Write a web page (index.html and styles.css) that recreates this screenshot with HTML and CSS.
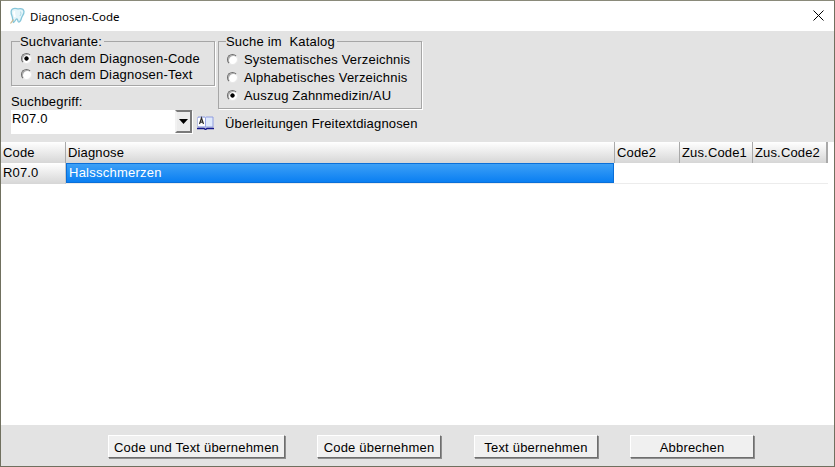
FILE: index.html
```html
<!DOCTYPE html>
<html lang="de">
<head>
<meta charset="utf-8">
<title>Diagnosen-Code</title>
<link rel="stylesheet" href="styles.css">
</head>
<body>
<div class="window">
  <header class="titlebar">
    <svg class="app-icon" width="16" height="18" viewBox="0 0 16 18">
      <path d="M3.500 2C6 .5 8 2 9.500 1.800C11.500 1.500 14.500 1.500 15 4.500C15.300 7 13 9 12.500 11C12 13 11 15.500 9.500 15C8.500 14.500 9 12 7.800 11.800C6.500 12 6 15 4.500 15.500C3.500 14.500 4 11.500 3 9C2 6.500 1.500 3.500 3.500 2Z" fill="#e6f5fa" stroke="#86c6da" stroke-width="1.300"/>
      <path d="M5.500 4C4.500 5.500 5.500 8 6 10" fill="none" stroke="#ffffff" stroke-width="1.800"/>
      <path d="M11 4.500C12.500 5 12 7.500 11 9" fill="none" stroke="#a9d8e6" stroke-width="1"/>
      <path d="M1.500 16.500L4.500 12.500" stroke="#cdb98f" stroke-width="1.200"/>
    </svg>
    <span class="title">Diagnosen-Code</span>
    <svg class="close" width="11" height="11" viewBox="0 0 11 11"><path d="M.5.5l10 10M10.500.5l-10 10" stroke="#000" stroke-width="1" fill="none"/></svg>
  </header>

  <section class="search">
    <fieldset class="group group-variant">
      <legend>Suchvariante:</legend>
      <label class="option"><input type="radio" name="variant" checked>nach dem Diagnosen-Code</label>
      <label class="option"><input type="radio" name="variant">nach dem Diagnosen-Text</label>
    </fieldset>
    <fieldset class="group group-catalog">
      <legend>Suche im&nbsp; Katalog</legend>
      <label class="option"><input type="radio" name="catalog">Systematisches Verzeichnis</label>
      <label class="option"><input type="radio" name="catalog">Alphabetisches Verzeichnis</label>
      <label class="option"><input type="radio" name="catalog" checked>Auszug Zahnmedizin/AU</label>
    </fieldset>
    <div class="term-label">Suchbegriff:</div>
    <div class="term-row">
      <div class="combo">
        <span class="combo-value">R07.0</span>
        <span class="combo-button"><svg width="9" height="5" viewBox="0 0 9 5"><path d="M0 0h9L4.500 5z" fill="#000"/></svg></span>
      </div>
      <svg class="book" width="17" height="14" viewBox="0 0 17 14">
        <path d="M1 1h7l.5.5L9 1h7v10H1z" fill="#dfe9fb" stroke="#8f9ce0" stroke-width="1"/>
        <path d="M1 2h7v8H1z" fill="#fff"/>
        <path d="M8.500 2v9" stroke="#9aa6e6" stroke-width="1"/>
        <path d="M0 12.500h7l1.500 1 1.500-1h7" fill="none" stroke="#14168a" stroke-width="1.500"/>
        <path d="M2.500 8l2-6 2 6M3.300 6.200h2.400" fill="none" stroke="#2a2a2a" stroke-width="1.200"/>
      </svg>
      <span class="link">Überleitungen Freitextdiagnosen</span>
    </div>
  </section>

  <section class="table">
    <div class="thead">
      <div class="th col-code">Code</div>
      <div class="th col-diag">Diagnose</div>
      <div class="th col-code2">Code2</div>
      <div class="th col-z1">Zus.Code1</div>
      <div class="th col-z2">Zus.Code2</div>
    </div>
    <div class="tr">
      <div class="td-head col-code">R07.0</div>
      <div class="td-selected">Halsschmerzen</div>
    </div>
  </section>

  <footer class="actions">
    <button class="btn btn-both">Code und Text übernehmen</button>
    <button class="btn btn-code">Code übernehmen</button>
    <button class="btn btn-text">Text übernehmen</button>
    <button class="btn btn-cancel">Abbrechen</button>
  </footer>
</div>
</body>
</html>
```
FILE: styles.css
```css
* { box-sizing: border-box; }
html, body { margin: 0; height: 100%; }
body {
  font-family: "Liberation Sans", Arial, sans-serif;
  font-size: 13px;
  letter-spacing: .2px;
  color: #000;
  overflow: hidden;
}
.window {
  width: 835px;
  height: 467px;
  display: flex;
  flex-direction: column;
  background: #e3e3e3;
  border: 1px solid #70705f;
  border-top-color: #8a8a7a;
}
.titlebar {
  height: 30px;
  flex: none;
  background: #fff;
  display: flex;
  align-items: center;
  padding: 0 10px 0 8px;
}
.app-icon { flex: none; }
.title {
  font-family: "Noto Sans", sans-serif;
  font-size: 11.500px;
  letter-spacing: 0;
  margin-left: 5px;
  flex: 1;
}
.close { margin-top: -1px; }
.search {
  height: 111px;
  flex: none;
  display: grid;
  grid-template-columns: 204px 204px;
  grid-template-rows: 50px 25px 24px;
  column-gap: 3px;
  padding: 4px 0 0 10px;
  align-items: start;
}
.group {
  margin: 0;
  padding: 2px 0 0 9px;
  border: 1px solid #a6a6a6;
  box-shadow: 1px 1px 0 #fff;
  min-width: 0;
}
.group legend {
  padding: 0 2px 0 0;
  margin-left: -1px;
  line-height: 13px;
}
.group-variant { height: 51px; grid-row: 1; grid-column: 1; }
.group-catalog { height: 74px; grid-row: 1 / 3; grid-column: 2; padding-left: 8px; }
.option {
  display: flex;
  align-items: center;
  height: 16px;
  white-space: nowrap;
}
.group-catalog .option { height: 18px; }
.option input {
  appearance: none;
  width: 11px;
  height: 11px;
  margin: 0 5px 0 0;
  border-radius: 50%;
  flex: none;
  background: #fff;
  border: 1px solid;
  border-color: #6c6c6c #e8e8e8 #e8e8e8 #6c6c6c;
  box-shadow: inset 1px 1px 0 #b0b0b0;
}
.group-catalog .option input { margin-right: 6px; }
.option input:checked {
  background: radial-gradient(circle at 50% 50%, #000 0 1.800px, #fff 2.500px);
}
.term-label {
  grid-row: 2;
  grid-column: 1;
  line-height: 15px;
  align-self: end;
  margin-bottom: 1px;
}
.term-row {
  grid-row: 3;
  grid-column: 1 / 3;
  display: flex;
  align-items: center;
  height: 24px;
}
.combo {
  width: 181px;
  height: 24px;
  display: flex;
  background: #fff;
  flex: none;
}
.combo-value { flex: 1; padding-left: 1px; line-height: 18px; }
.combo-button {
  width: 17px;
  height: 23px;
  background: #ececec;
  border: 2px solid;
  border-color: #7a7a7a #7a7a7a #7a7a7a #f2f2f2;
  box-shadow: 1px 1px 0 #fff;
  display: flex;
  align-items: center;
  justify-content: center;
}
.book { margin: 2px 0 0 5px; flex: none; }
.link { margin-left: 11px; padding-top: 2px; white-space: nowrap; letter-spacing: .15px; }
.table {
  flex: 1;
  background: #fff;
  min-height: 0;
  letter-spacing: .15px;
}
.thead, .tr { display: flex; }
.thead { height: 21px; }
.tr { height: 21px; border-bottom: 1px solid #ececec; width: 827px; }
.th, .td-head {
  background: linear-gradient(#ffffff, #d6d6d6);
  border-right: 1px solid #a9a9a9;
  padding-left: 2px;
  line-height: 21px;
  white-space: nowrap;
}
.thead .col-z2 { border-right-width: 2px; }
.td-head { border-right-color: #c8c8c8; height: 21px; line-height: 20px; }
.col-code { width: 65px; }
.col-diag { width: 549px; }
.col-code2 { width: 65px; }
.col-z1 { width: 73px; }
.col-z2 { width: 75px; }
.td-selected {
  background: linear-gradient(#3da0f6, #0a7ff2);
  border: 1px solid #0a6fd8;
  color: #fff;
  height: 20px;
  width: 548px;
  padding-left: 2px;
  line-height: 18px;
  letter-spacing: .25px;
}
.actions {
  height: 41px;
  flex: none;
  display: flex;
  align-items: flex-start;
  padding: 10px 0 0 107px;
}
.btn {
  font: inherit;
  letter-spacing: .2px;
  height: 23px;
  padding: 1px 0 0;
  background: #f0f0f0;
  border: 1px solid;
  border-color: #fff #6e6e6e #6e6e6e #fff;
  box-shadow: 1px 1px 0 #8e8e8e;
  color: #000;
}
.btn-both { width: 177px; }
.btn-code { width: 124px; margin-left: 32px; }
.btn-text { width: 124px; margin-left: 33px; }
.btn-cancel { width: 124px; margin-left: 32px; }
```
